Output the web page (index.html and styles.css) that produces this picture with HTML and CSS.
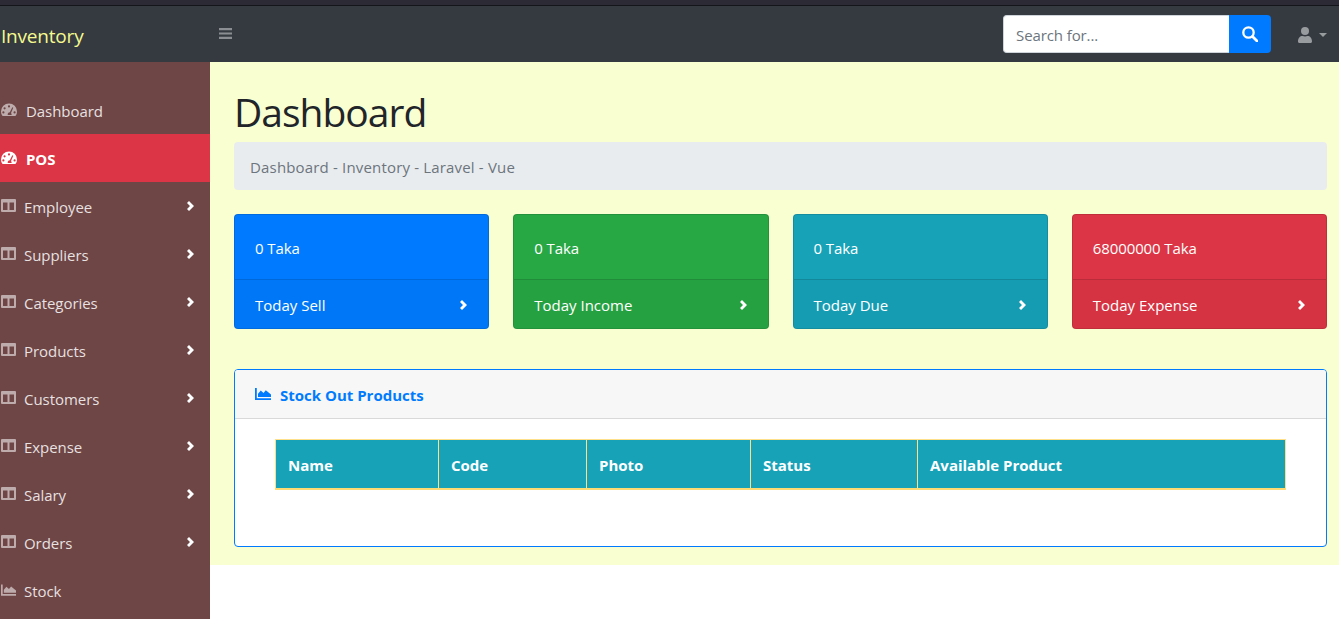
FILE: index.html
```html
<!DOCTYPE html>
<html lang="en">
<head>
  <meta charset="UTF-8">
  <title>Inventory</title>
  <link rel="stylesheet" href="styles.css">
</head>
<body>
  <svg class="sprite" width="0" height="0">
    <symbol id="i-gauge" viewBox="0 0 16 14"><path fill-rule="evenodd" d="M8 0.500A8 8 0 0 0 0 8.500c0 1.500.4 2.900 1.100 4.100.2.300.5.400.8.400h12.200c.3 0 .6-.1.800-.4.700-1.200 1.100-2.600 1.100-4.100a8 8 0 0 0-8-8zM8 2.300a1.100 1.100 0 1 1 0 2.200 1.100 1.100 0 0 1 0-2.200zM3.600 4.200a1.100 1.100 0 1 1 0 2.200 1.100 1.100 0 0 1 0-2.200zM2.400 8.300a1.100 1.100 0 1 1 0 2.200 1.100 1.100 0 0 1 0-2.200zM13.600 8.300a1.100 1.100 0 1 1 0 2.200 1.100 1.100 0 0 1 0-2.200zM11.300 4.300l1 .4-2.300 5.300c.4.400.6.900.6 1.400 0 .3 0 .5-.1.700H6.800c-.1-.2-.1-.4-.1-.7 0-1.200 1-2.100 2.100-2.100z"/></symbol>
    <symbol id="i-columns" viewBox="0 0 15 13"><path fill-rule="evenodd" d="M1 0h13a1 1 0 0 1 1 1v11a1 1 0 0 1-1 1H1a1 1 0 0 1-1-1V1a1 1 0 0 1 1-1zM2 3.500v7.500h4.500V3.500zM8.500 3.500v7.500H13V3.500z"/></symbol>
    <symbol id="i-area" viewBox="0 0 16 12"><path d="M0 0h1.800v10.200H16V12H0zM3 9V5.800L5.800 2.500 8.500 5l2.300-2.800L16 6.500V9z"/></symbol>
    <symbol id="i-chevron" viewBox="0 0 7 10"><path d="M0 2 2 0 7 5 2 10 0 8 3 5z"/></symbol>
  </svg>

  <nav class="topbar">
    <a class="brand">Inventory</a>
    <svg class="toggle" viewBox="0 0 12 10"><path d="M0 0h12v2H0zM0 4h12v2H0zM0 8h12v2H0z"/></svg>
    <div class="search">
      <div class="search-input">Search for...</div>
      <div class="search-btn">
        <svg viewBox="0 0 16 16"><circle cx="6.500" cy="6.500" r="5.200" fill="none" stroke="#fff" stroke-width="2.300"/><path d="M10.500 10.500 15 15" stroke="#fff" stroke-width="2.800" stroke-linecap="round"/></svg>
      </div>
    </div>
    <div class="user">
      <svg class="user-icon" viewBox="0 0 14 16"><circle cx="7" cy="4" r="4"/><path d="M0 14.500C0 11 2 9 4.500 9c1.600.6 3.400.6 5 0C12 9 14 11 14 14.500c0 .9-.6 1.500-1.500 1.500h-11C.6 16 0 15.400 0 14.500z"/></svg>
      <span class="caret"></span>
    </div>
  </nav>

  <div class="wrapper">
    <aside class="sidebar">
      <a class="nav-item"><svg class="nav-icon gauge"><use href="#i-gauge"/></svg><span class="label wide">Dashboard</span></a>
      <a class="nav-item active"><svg class="nav-icon gauge"><use href="#i-gauge"/></svg><span class="label wide">POS</span></a>
      <a class="nav-item"><svg class="nav-icon"><use href="#i-columns"/></svg><span class="label">Employee</span><svg class="chev"><use href="#i-chevron"/></svg></a>
      <a class="nav-item"><svg class="nav-icon"><use href="#i-columns"/></svg><span class="label">Suppliers</span><svg class="chev"><use href="#i-chevron"/></svg></a>
      <a class="nav-item"><svg class="nav-icon"><use href="#i-columns"/></svg><span class="label">Categories</span><svg class="chev"><use href="#i-chevron"/></svg></a>
      <a class="nav-item"><svg class="nav-icon"><use href="#i-columns"/></svg><span class="label">Products</span><svg class="chev"><use href="#i-chevron"/></svg></a>
      <a class="nav-item"><svg class="nav-icon"><use href="#i-columns"/></svg><span class="label">Customers</span><svg class="chev"><use href="#i-chevron"/></svg></a>
      <a class="nav-item"><svg class="nav-icon"><use href="#i-columns"/></svg><span class="label">Expense</span><svg class="chev"><use href="#i-chevron"/></svg></a>
      <a class="nav-item"><svg class="nav-icon"><use href="#i-columns"/></svg><span class="label">Salary</span><svg class="chev"><use href="#i-chevron"/></svg></a>
      <a class="nav-item"><svg class="nav-icon"><use href="#i-columns"/></svg><span class="label">Orders</span><svg class="chev"><use href="#i-chevron"/></svg></a>
      <a class="nav-item"><svg class="nav-icon stock"><use href="#i-area"/></svg><span class="label">Stock</span></a>
    </aside>

    <main class="main">
      <div class="content">
        <h1>Dashboard</h1>
        <div class="breadcrumb">Dashboard - Inventory - Laravel - Vue</div>

        <div class="stats">
          <div class="stat blue">
            <div class="stat-body">0 Taka</div>
            <div class="stat-foot"><span>Today Sell</span><svg class="chev"><use href="#i-chevron"/></svg></div>
          </div>
          <div class="stat green">
            <div class="stat-body">0 Taka</div>
            <div class="stat-foot"><span>Today Income</span><svg class="chev"><use href="#i-chevron"/></svg></div>
          </div>
          <div class="stat teal">
            <div class="stat-body">0 Taka</div>
            <div class="stat-foot"><span>Today Due</span><svg class="chev"><use href="#i-chevron"/></svg></div>
          </div>
          <div class="stat red">
            <div class="stat-body">68000000 Taka</div>
            <div class="stat-foot"><span>Today Expense</span><svg class="chev"><use href="#i-chevron"/></svg></div>
          </div>
        </div>

        <section class="panel">
          <header class="panel-head"><svg class="panel-icon"><use href="#i-area"/></svg>Stock Out Products</header>
          <div class="panel-body">
            <table class="stock-table">
              <colgroup>
                <col class="col-name"><col class="col-code"><col class="col-photo"><col class="col-status"><col>
              </colgroup>
              <thead>
                <tr><th>Name</th><th>Code</th><th>Photo</th><th>Status</th><th>Available Product</th></tr>
              </thead>
            </table>
          </div>
        </section>
      </div>
    </main>
  </div>
</body>
</html>
```

FILE: styles.css
```css
* { box-sizing: border-box; }

body {
  margin: 0;
  height: 619px;
  overflow: hidden;
  background: #fff;
  color: #212529;
  font-family: "Open Sans", "Noto Sans", sans-serif;
  font-size: 15px;
}

.sprite { position: absolute; }

/* top bar */
.topbar {
  display: flex;
  align-items: center;
  height: 62px;
  padding-top: 2px;
  background: #343a40;
  border-top: 5px solid #2b2a35;
  box-shadow: inset 0 1px 0 #14151a;
}
.brand {
  width: 219px;
  padding: 2px 0 0 1px;
  color: #f5f98e;
  font-size: 19px;
  letter-spacing: -0.2px;
}
.toggle {
  width: 13px;
  height: 11px;
  margin-top: -3px;
  fill: #8b8f93;
}
.search {
  display: flex;
  height: 38px;
  margin-left: auto;
  margin-top: -1px;
  margin-bottom: 1px;
}
.search-input {
  width: 226px;
  padding: 0 12px;
  line-height: 38px;
  background: #fff;
  border: 1px solid #ced4da;
  border-right: 0;
  border-radius: 4px 0 0 4px;
  color: #6c757d;
  letter-spacing: -0.1px;
}
.search-btn {
  display: flex;
  align-items: center;
  justify-content: center;
  width: 42px;
  background: #007bff;
  border-radius: 0 4px 4px 0;
}
.search-btn svg { width: 16px; height: 16px; }
.user {
  display: flex;
  align-items: center;
  width: 68px;
  padding-left: 27px;
}
.user-icon { width: 14px; height: 16px; fill: #999c9f; }
.caret {
  margin-left: 7px;
  border-top: 4px solid #999c9f;
  border-left: 4px solid transparent;
  border-right: 4px solid transparent;
}

.wrapper {
  display: flex;
  height: 557px;
}

/* sidebar */
.sidebar {
  flex: none;
  width: 210px;
  padding-top: 24px;
  background: #6f4646;
}
.nav-item {
  display: flex;
  align-items: center;
  height: 48px;
  padding-top: 2px;
  padding-right: 16px;
  color: rgba(255, 255, 255, 0.85);
}
.nav-item.active {
  background: #dc3545;
  color: #fff;
  font-weight: 700;
}
.nav-icon {
  flex: none;
  width: 15px;
  height: 13px;
  margin: -3px 0 0 1px;
  fill: rgba(255, 255, 255, 0.55);
}
.nav-icon.gauge {
  width: 16px;
  height: 14px;
  margin-top: -2px;
}
.nav-icon.stock { height: 12px; }
.active .nav-icon { fill: #fff; }
.label {
  margin-left: 8px;
  letter-spacing: -0.05px;
}
.label.wide { margin-left: 9px; }
.chev {
  flex: none;
  width: 7px;
  height: 10px;
  margin-left: auto;
  fill: #fff;
}
.nav-item .chev { margin-top: -3px; }

/* main */
.main {
  flex: 1;
  min-width: 0;
}
.content {
  height: 503px;
  padding: 24px 12px 0 24px;
  background: #f9ffd1;
}
h1 {
  margin: 0;
  height: 56px;
  font-size: 39px;
  font-weight: 400;
  line-height: 52px;
  letter-spacing: -1px;
}
.breadcrumb {
  height: 48px;
  padding: 0 16px;
  line-height: 51px;
  background: #e9ecef;
  border-radius: 4px;
  color: #6c757d;
  letter-spacing: 0.17px;
}

/* stat cards */
.stats {
  display: grid;
  grid-template-columns: repeat(4, 1fr);
  column-gap: 24px;
  margin-top: 24px;
}
.stat {
  height: 115px;
  border-radius: 4px;
  border: 1px solid rgba(0, 0, 0, 0.125);
  background-clip: border-box;
  color: #fff;
  overflow: hidden;
}
.stat.blue { background: #007bff; }
.stat.green { background: #28a745; }
.stat.teal { background: #17a2b8; }
.stat.red { background: #dc3545; }
.stat-body {
  height: 64px;
  padding: 0 20px;
  line-height: 67px;
  letter-spacing: -0.1px;
}
.stat-foot {
  display: flex;
  align-items: center;
  height: 50px;
  padding: 0 21px 0 20px;
  background: rgba(0, 0, 0, 0.03);
  border-top: 1px solid rgba(0, 0, 0, 0.125);
}

/* stock panel */
.panel {
  height: 178px;
  margin-top: 40px;
  background: #fff;
  border: 1px solid #007bff;
  border-radius: 4px;
  overflow: hidden;
}
.panel-head {
  display: flex;
  align-items: center;
  height: 49px;
  padding: 2px 20px 0;
  background: #f7f7f7;
  border-bottom: 1px solid #d9d9d9;
  color: #007bff;
  font-weight: 700;
}
.panel-icon {
  width: 16px;
  height: 12px;
  margin: -2px 9px 0 0;
  fill: #007bff;
}
.panel-body { padding: 20px 40px; }
.stock-table {
  width: 1011px;
  height: 51px;
  border-collapse: collapse;
  table-layout: fixed;
}
.col-name { width: 163px; }
.col-code { width: 148px; }
.col-photo { width: 164px; }
.col-status { width: 167px; }
.stock-table th {
  padding: 2px 12px 0;
  background: #17a2b8;
  border: 1px solid #ffe08a;
  border-bottom: 2px solid #ffdb74;
  color: #fff;
  text-align: left;
}
```
